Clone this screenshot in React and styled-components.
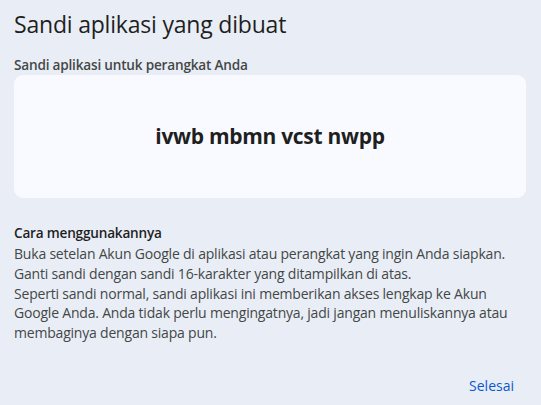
import React from "react";
import styled, { createGlobalStyle } from "styled-components";

const GlobalStyle = createGlobalStyle`
  html, body {
    margin: 0;
    padding: 0;
    background: #e9eef6;
  }
  body {
    font-family: "Open Sans", Roboto, "Liberation Sans", sans-serif;
    -webkit-font-smoothing: antialiased;
  }
`;

const Dialog = styled.div`
  width: 541px;
  height: 405px;
  box-sizing: border-box;
  padding: 9px 15px 0 14px;
  background: #e9eef6;
  display: flex;
  flex-direction: column;
`;

const Title = styled.h1`
  margin: 0;
  font-family: "Open Sans", sans-serif;
  font-weight: 400;
  font-size: 23px;
  line-height: 30px;
  color: #1f1f1f;
  letter-spacing: -0.2px;
`;

const Label = styled.div`
  margin-top: 17px;
  font-size: 13.6px;
  line-height: 18px;
  font-weight: 600;
  color: #444746;
  letter-spacing: -0.2px;
`;

const PasswordCard = styled.div`
  margin-top: 1px;
  height: 123px;
  border-radius: 9px;
  background: #f8faff;
  display: flex;
  align-items: center;
  justify-content: center;
`;

const Password = styled.div`
  font-family: "Open Sans", sans-serif;
  font-weight: 700;
  font-size: 21px;
  color: #1f1f1f;
  letter-spacing: -0.3px;
  padding-bottom: 1px;
`;

const HowTo = styled.div`
  margin-top: 25px;
  color: #444746;
  font-size: 14px;
  line-height: 19.8px;
  letter-spacing: -0.2px;
  width: 496px;
`;

const HowToTitle = styled.div`
  font-weight: 600;
  font-size: 13.6px;
  line-height: 19px;
  margin-bottom: 2px;
  color: #1f1f1f;
`;

const Line = styled.p`
  margin: 0;
`;

const Actions = styled.div`
  margin-top: auto;
  display: flex;
  justify-content: flex-end;
  padding-bottom: 10px;
`;

const TextButton = styled.button`
  border: none;
  background: none;
  padding: 0 12px 0 0;
  font-family: "Open Sans", sans-serif;
  font-size: 14px;
  font-weight: 500;
  color: #0b57d0;
  cursor: pointer;
`;

export default function App() {
  return (
    <>
      <GlobalStyle />
      <Dialog>
        <Title>Sandi aplikasi yang dibuat</Title>
        <Label>Sandi aplikasi untuk perangkat Anda</Label>
        <PasswordCard>
          <Password>ivwb mbmn vcst nwpp</Password>
        </PasswordCard>
        <HowTo>
          <HowToTitle>Cara menggunakannya</HowToTitle>
          <Line>
            Buka setelan Akun Google di aplikasi atau perangkat yang ingin Anda siapkan.
            Ganti sandi dengan sandi 16-karakter yang ditampilkan di atas.
          </Line>
          <Line>
            Seperti sandi normal, sandi aplikasi ini memberikan akses lengkap ke Akun Google
            Anda. Anda tidak perlu mengingatnya, jadi jangan menuliskannya atau membaginya
            dengan siapa pun.
          </Line>
        </HowTo>
        <Actions>
          <TextButton>Selesai</TextButton>
        </Actions>
      </Dialog>
    </>
  );
}
